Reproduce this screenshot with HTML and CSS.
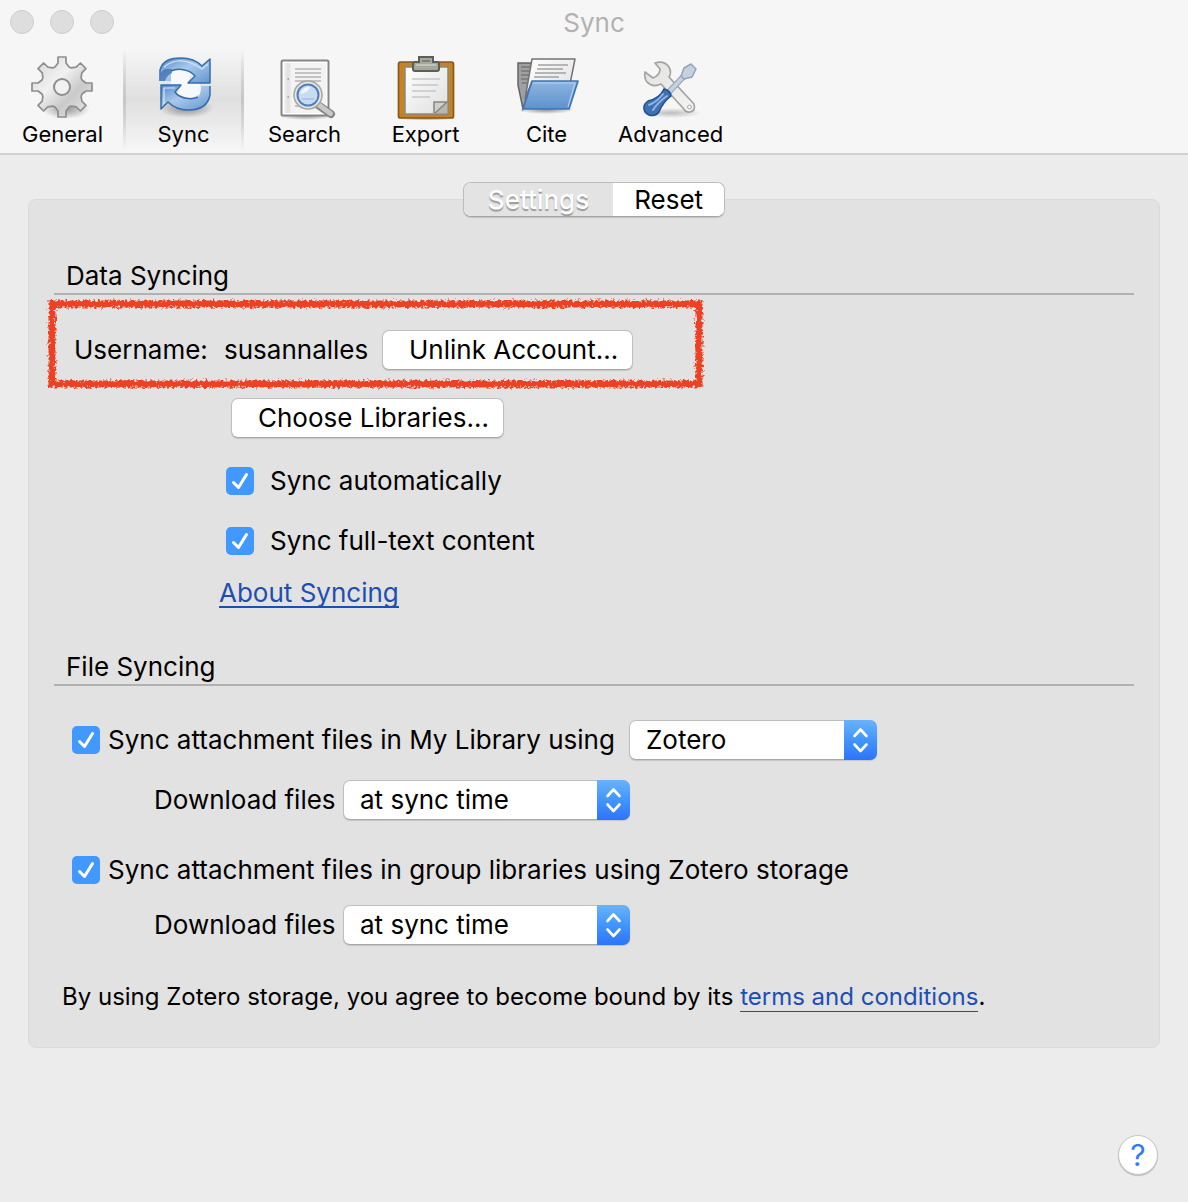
FILE: index.html
```html
<!DOCTYPE html>
<html lang="en">
<head>
<meta charset="utf-8">
<meta name="viewport" content="width=device-width, initial-scale=1">
<title>Sync</title>
<link rel="stylesheet" href="styles.css">
</head>
<body>
<svg class="defs" aria-hidden="true">
  <defs>
    <linearGradient id="metal" x1="0" y1="0" x2="1" y2="1"><stop offset="0" stop-color="#d4d4d4"/><stop offset=".4" stop-color="#f1f1f1"/><stop offset=".65" stop-color="#c9c9c9"/><stop offset="1" stop-color="#ededed"/></linearGradient>
    <linearGradient id="steel" x1="0" y1="0" x2="1" y2="1"><stop offset="0" stop-color="#e2e2e0"/><stop offset="1" stop-color="#f4f4f3"/></linearGradient>
    <linearGradient id="blue" x1="0" y1="0" x2="1" y2="1"><stop offset="0" stop-color="#5288c7"/><stop offset=".45" stop-color="#a9c8ea"/><stop offset="1" stop-color="#6296d0"/></linearGradient>
    <linearGradient id="folder" x1="0" y1="0" x2="0" y2="1"><stop offset="0" stop-color="#8db5e0"/><stop offset="1" stop-color="#5e92cd"/></linearGradient>
    <linearGradient id="paper" x1="0" y1="0" x2="1" y2="1"><stop offset="0" stop-color="#fff"/><stop offset="1" stop-color="#dedede"/></linearGradient>
    <radialGradient id="shade"><stop offset="0" stop-color="#000" stop-opacity=".4"/><stop offset="1" stop-color="#000" stop-opacity="0"/></radialGradient>
    <filter id="crayon" x="-5%" y="-15%" width="110%" height="130%">
      <feTurbulence type="fractalNoise" baseFrequency=".4" numOctaves="2" seed="4" result="noise"/>
      <feDisplacementMap in="SourceGraphic" in2="noise" scale="7" xChannelSelector="R" yChannelSelector="G"/>
    </filter>
    <symbol id="check" viewBox="0 0 28 28"><path d="M7.500 15.500L12.500 20.500L20.500 7.500" fill="none" stroke="#fff" stroke-width="3" stroke-linecap="round" stroke-linejoin="round"/></symbol>
    <symbol id="chevrons" viewBox="0 0 33 40"><path d="M10.500 16L16.500 9.500L22.500 16M10.500 24.500L16.500 31L22.500 24.500" fill="none" stroke="#fff" stroke-width="2.600" stroke-linecap="round" stroke-linejoin="round"/></symbol>
  </defs>
</svg>
<header class="window-top">
  <div class="titlebar">
    <div class="lights"><span class="light"></span><span class="light"></span><span class="light"></span></div>
    <h1 class="title">Sync</h1>
  </div>
  <nav class="toolbar" aria-label="Preferences">
    <button class="tool" type="button">
      <svg class="tool-icon" viewBox="31 54 64 66" aria-hidden="true">
        <ellipse cx="66" cy="109" rx="24" ry="10" fill="url(#shade)"/>
        <path transform="translate(62 87)" fill="url(#metal)" stroke="#8e8e8e" stroke-width="1.700" stroke-linejoin="round" d="M-7-20L-4-24V-30H4V-24L7-20L9.200-19.100L14.100-19.800L18.400-24L24-18.400L19.800-14.100L19.100-9.200L20-7L24-4H30V4H24L20 7L19.100 9.200L19.800 14.100L24 18.400L18.400 24L14.100 19.800L9.200 19.100L7 20L4 24V30H-4V24L-7 20L-9.200 19.100L-14.100 19.800L-18.400 24L-24 18.400L-19.800 14.100L-19.100 9.200L-20 7L-24 4H-30V-4H-24L-20-7L-19.100-9.200L-19.800-14.100L-24-18.400L-18.400-24L-14.100-19.800L-9.200-19.100Z"/>
        <circle cx="62" cy="87" r="8" fill="#f1f1f1" stroke="#8e8e8e" stroke-width="2"/>
      </svg>
      <span>General</span>
    </button>
    <button class="tool tool-selected" type="button" aria-current="page">
      <svg class="tool-icon" viewBox="152 54 64 66" aria-hidden="true">
        <ellipse cx="186" cy="108" rx="28" ry="10" fill="url(#shade)"/>
        <path d="M171 70Q182 66 191 73L188 82H199L202 92Q190 102 177 94L181 85H171Z" fill="#f6f8fb"/>
        <path d="M160 81V70C163 60 171 58 181 58C191 58 197 61 202 66L210 59V83H188L195 76C189 69 178 68 171 71V81Z" fill="url(#blue)"/>
        <path d="M160 81V70C163 60 171 58 181 58C191 58 197 61 202 66L210 59V83H188L195 76C189 69 178 68 171 71" fill="none" stroke="#366cad" stroke-width="1.500" stroke-linejoin="round"/>
        <path d="M161 109V85H181L175 92C180 99 192 100 198 97Q201 95 201 86H210V95C208 106 199 110 188 110C180 110 173 107 168 102Z" fill="url(#blue)"/>
        <path d="M210 86V95C208 106 199 110 188 110C180 110 173 107 168 102L161 109V85H181L175 92C180 99 192 100 198 97" fill="none" stroke="#366cad" stroke-width="1.500" stroke-linejoin="round"/>
        <path d="M161 81V73Q163 68 172 69V73Q167 75 165 81Z" fill="#3569ad" opacity=".7"/>
        <path d="M164 67Q180 54 202 69L208 64" fill="none" stroke="#d0e3f6" stroke-width="1.200"/>
        <path d="M164 104V88H175" fill="none" stroke="#d5e7f9" stroke-width="1.200"/>
      </svg>
      <span>Sync</span>
    </button>
    <button class="tool" type="button">
      <svg class="tool-icon" viewBox="273 54 64 66" aria-hidden="true">
        <ellipse cx="306" cy="116" rx="28" ry="4" fill="url(#shade)"/>
        <rect x="281.500" y="60.500" width="47" height="55" rx="1.500" fill="#fff" stroke="#858585" stroke-width="2"/>
        <rect x="284" y="63" width="42" height="50" fill="#f3f3f3"/><path d="M288 63V113" stroke="#e4e4e4" stroke-width="5"/>
        <path d="M295 69H321M295 73H321M295 77H321M295 81H321M295 106H305" stroke="#b4b4b4" stroke-width="1.500"/>
        <path d="M287.500 79H289M287.500 97H289" stroke="#999" stroke-width="1.500"/>
        <path d="M318 105L331 114" stroke="#858585" stroke-width="8" stroke-linecap="round"/>
        <path d="M319 105L330.500 113.500" stroke="#c8c8c8" stroke-width="5" stroke-linecap="round"/>
        <circle cx="308" cy="95" r="14" fill="#e7e7e3" stroke="#a5a7a0" stroke-width="1.500"/>
        <circle cx="308" cy="95" r="10.500" fill="#c7dbf1" stroke="#527fbf" stroke-width="2"/>
        <path d="M300 94Q303 86 310 87Q308 93 300 94" fill="#f1f6fc"/><path d="M302 99H314" stroke="#91b5dc"/>
      </svg>
      <span>Search</span>
    </button>
    <button class="tool" type="button">
      <svg class="tool-icon" viewBox="394 54 64 66" aria-hidden="true">
        <ellipse cx="427" cy="118" rx="30" ry="3" fill="url(#shade)"/>
        <rect x="398.500" y="62" width="55" height="56" rx="2" fill="#c58328" stroke="#885a17" stroke-width="1.700"/>
        <path d="M405 67H448V114H405Z" fill="url(#paper)" stroke="#898981" stroke-width="1.500"/>
        <path d="M434 113V102H447V113Z" fill="#b6b7b0"/><path d="M434 113V102H447L435 113" fill="#cfd0ca" stroke="#85877f" stroke-width="1.500"/>
        <path d="M412 79H440M412 85H438M412 91H436M412 97H430" stroke="#c6c6c6" stroke-width="1.700"/>
        <path d="M413 64Q413 62 415 62H419V57H433V62H437Q439 62 439 64V69Q439 71 437 71H415Q413 71 413 69Z" fill="#a7a89d" stroke="#5c5f58" stroke-width="2"/>
        <path d="M416 65H436" stroke="#cbccc3" stroke-width="1.500"/><path d="M422 61H430" stroke="#7d8077" stroke-width="2"/>
      </svg>
      <span>Export</span>
    </button>
    <button class="tool" type="button">
      <svg class="tool-icon" viewBox="515 54 64 66" aria-hidden="true">
        <ellipse cx="546" cy="110" rx="28" ry="4" fill="url(#shade)"/>
        <path d="M518 63H533V80L523 109L518 85Z" fill="#a0a0a0" stroke="#646464" stroke-width="1.500"/>
        <path d="M521 67H532M521 71H531M521 75H530M521 79H529M522 83H529" stroke="#777" stroke-width="1.500"/>
        <path d="M532 59H575L570 84H531L525 99Z" fill="url(#paper)" stroke="#747474" stroke-width="1.500" stroke-linejoin="round"/>
        <path d="M538 65H568M537 69H563M535 73H566M534 77H559" stroke="#a1a1a1" stroke-width="1.500"/>
        <path d="M532 81H578L569 109H523Z" fill="url(#folder)" stroke="#3f74b5" stroke-width="1.700" stroke-linejoin="round"/>
        <path d="M533 83H575L568 107" fill="none" stroke="#b1cff0" stroke-width="1.200"/>
      </svg>
      <span>Cite</span>
    </button>
    <button class="tool" type="button">
      <svg class="tool-icon" viewBox="639 54 64 66" aria-hidden="true">
        <ellipse cx="671" cy="113" rx="31" ry="5" fill="url(#shade)" opacity=".6"/>
        <path d="M655 63Q664 60 669 67Q672 73 669 77L694 104Q696 111 690 112Q686 113 683 108L661 84Q653 88 647 82Q644 78 645 72L653 78Q660 75 660 69Z" fill="url(#steel)" stroke="#a3a39f" stroke-width="1.700" stroke-linejoin="round"/>
        <circle cx="689.500" cy="107" r="2" fill="#f8f8f8" stroke="#aaa"/>
        <path d="M668 93L684 76" stroke="#94a2b6" stroke-width="6"/><path d="M668 93L684 76" stroke="#c6d1df" stroke-width="4"/>
        <path d="M681 76L684 68L691 64L696 69L692 77L684 79Z" fill="#c6d1df" stroke="#94a2b6" stroke-width="1.500" stroke-linejoin="round"/>
        <path d="M644 106Q643 112 649 115Q655 117 659 112Q663 102 671 96Q671 91 664 89Q660 98 648 101Q645 103 644 106Z" fill="#3d72b5" stroke="#234f8e" stroke-width="1.500"/>
        <path d="M649 105Q657 102 663 94M653 110Q658 102 667 96" fill="none" stroke="#91b4de" stroke-width="2" stroke-linecap="round"/>
      </svg>
      <span>Advanced</span>
    </button>
  </nav>
</header>
<main class="content">
  <div class="tabs" role="tablist">
    <button class="tab tab-active" type="button" role="tab" aria-selected="true">Settings</button>
    <button class="tab" type="button" role="tab" aria-selected="false">Reset</button>
  </div>
  <div class="panel" role="tabpanel">
    <section>
      <h2 class="heading">Data Syncing</h2>
      <div class="account">
        <span class="account-label">Username:</span>
        <span class="account-name">susannalles</span>
        <button class="push" type="button">Unlink Account…</button>
        <svg class="marker" viewBox="0 0 655 88" preserveAspectRatio="none" aria-hidden="true"><path d="M4 4H651V84H4Z" fill="none" stroke="#ee4023" stroke-width="7" filter="url(#crayon)"/></svg>
      </div>
      <div class="options">
        <button class="push choose" type="button">Choose Libraries…</button>
        <label class="option option-wide"><span class="box"><input type="checkbox" checked><svg aria-hidden="true"><use href="#check"/></svg></span>Sync automatically</label>
        <label class="option option-wide"><span class="box"><input type="checkbox" checked><svg aria-hidden="true"><use href="#check"/></svg></span>Sync full-text content</label>
        <a class="link about" href="#about">About Syncing</a>
      </div>
    </section>
    <section>
      <h2 class="heading">File Syncing</h2>
      <div class="files">
        <div class="row">
          <label class="option option-library"><span class="box"><input type="checkbox" checked><svg aria-hidden="true"><use href="#check"/></svg></span>Sync attachment files in My Library using</label>
          <span class="popup popup-storage"><select aria-label="Storage"><option>Zotero</option><option>WebDAV</option></select><svg aria-hidden="true"><use href="#chevrons"/></svg></span>
        </div>
        <div class="row row-download">
          <label for="library-download">Download files</label>
          <span class="popup"><select id="library-download"><option>at sync time</option><option>as needed</option></select><svg aria-hidden="true"><use href="#chevrons"/></svg></span>
        </div>
        <label class="option option-group"><span class="box"><input type="checkbox" checked><svg aria-hidden="true"><use href="#check"/></svg></span>Sync attachment files in group libraries using Zotero storage</label>
        <div class="row row-download">
          <label for="group-download">Download files</label>
          <span class="popup"><select id="group-download"><option>at sync time</option><option>as needed</option></select><svg aria-hidden="true"><use href="#chevrons"/></svg></span>
        </div>
      </div>
      <p class="terms">By using Zotero storage, you agree to become bound by its <a class="link" href="#terms">terms and conditions</a>.</p>
    </section>
  </div>
</main>
<footer class="footer"><button class="help" type="button" aria-label="Help">?</button></footer>
</body>
</html>
```
FILE: styles.css
```css
* { box-sizing: border-box; }
body {
  display: flex;
  flex-direction: column;
  min-height: 100vh;
  margin: 0;
  background: #ececec;
  color: #000;
  font: 26px/32px Inter, "Liberation Sans", sans-serif;
}
button, select, input { margin: 0; font: inherit; color: inherit; }
.defs { position: absolute; width: 0; height: 0; }

.window-top { background: #f6f6f6; border-bottom: 2px solid #d1d1d1; }
.titlebar { display: grid; grid-template-columns: 1fr auto 1fr; align-items: center; height: 46px; padding: 0 10px; }
.lights { display: flex; gap: 16px; padding-bottom: 2px; }
.light { width: 24px; height: 24px; border: 1px solid #cecece; border-radius: 50%; background: #dedede; }
.title { margin: 0; color: #b2b2b2; font-size: 26px; font-weight: 400; }
.toolbar { display: flex; padding: 3px 2px 3px; }
.tool {
  display: flex;
  flex-direction: column;
  align-items: center;
  min-width: 121px;
  padding: 5px 11px 2px;
  border: 0;
  background: none;
  font-size: 22px;
  line-height: 28px;
}
.tool-icon { width: 64px; height: 66px; }
.tool-selected {
  background:
    linear-gradient(#f6f6f600, #c6c6c6 50%, #f6f6f600) left / 3px 100% no-repeat,
    linear-gradient(#f6f6f600, #c6c6c6 50%, #f6f6f600) right / 3px 100% no-repeat,
    linear-gradient(#f6f6f6, #dfdfdf 50%, #f6f6f6);
}

.content { padding: 27px 28px 0; }
.tabs {
  position: relative;
  display: flex;
  width: fit-content;
  height: 35px;
  margin: 0 auto -18px;
  overflow: hidden;
  border: 1px solid #bdbdbd;
  border-bottom-color: #a6a6a6;
  border-radius: 8px;
  background: #fff;
  box-shadow: 0 1px 1px #0002;
}
.tab { padding: 0 21px; border: 0; background: #fff; }
.tab-active { padding: 0 24px; background: #e3e3e3; color: #fff; font-weight: 500; text-shadow: 0 2px 1px #999; }
.panel { min-height: 849px; padding: 60px 25px 34px; border: 1px solid #dadada; border-radius: 8px; background: #e2e2e2; }
.heading { margin: 0; padding: 0 12px 1px; border-bottom: 2px solid #b1b1b1; font-size: 26px; font-weight: 400; }
.push {
  height: 40px;
  padding: 0 14px 0 26px;
  border: 1px solid #bfbfbf;
  border-bottom-color: #a9a9a9;
  border-radius: 7px;
  background: #fff;
  box-shadow: 0 1px 1px #0002;
  white-space: nowrap;
}
.account { position: relative; display: flex; align-items: center; height: 103px; padding: 6px 0 0 20px; }
.account-label { width: 150px; }
.account-name { width: 158px; }
.marker { position: absolute; top: 5px; left: -6px; width: 655px; height: 88px; overflow: visible; }
.options { display: flex; flex-direction: column; align-items: flex-start; padding-left: 165px; }
.choose { margin: 0 0 27px 12px; }
.option { display: flex; align-items: center; gap: 8px; }
.option-wide { gap: 16px; margin: 0 0 28px 7px; }
.box { display: grid; flex: none; width: 28px; height: 28px; }
.box > * { grid-area: 1 / 1; width: 28px; height: 28px; }
.box input { appearance: none; border-radius: 5px; background: #4198ff; }
.box svg, .popup svg { pointer-events: none; }
.link { color: #1d4fb3; text-decoration: none; border-bottom: 2px solid #1d4fb3; }
.about { margin: -5px 0 43px; line-height: 26px; }
.files { padding: 34px 0 0 18px; }
.row { display: flex; align-items: center; height: 40px; }
.option-library { width: 557px; white-space: nowrap; }
.row-download { margin-top: 20px; padding-left: 82px; }
.row-download label { width: 189px; }
.popup { display: grid; width: 287px; height: 40px; }
.popup > * { grid-area: 1 / 1; }
.popup-storage { width: 248px; }
.popup select {
  appearance: none;
  padding: 0 36px 0 16px;
  border: 1px solid #bfbfbf;
  border-bottom-color: #a9a9a9;
  border-radius: 7px;
  background: #fff;
  box-shadow: 0 1px 1px #0002;
}
.popup svg { justify-self: end; width: 33px; height: 40px; border-radius: 0 7px 7px 0; background: linear-gradient(#6ab2fb, #4196fd 50%, #2d73fb); }
.option-group { margin: 34px 0 -1px; }
.terms { margin: 36px 0 0 8px; font-size: 24px; }
.terms .link { border-bottom-width: 1px; }
.footer { display: flex; justify-content: flex-end; margin-top: auto; padding: 28px 30px 27px; }
.help { width: 40px; height: 40px; padding: 0; border: 1px solid #c5c5c5; border-radius: 50%; background: #fff; box-shadow: 0 1px 1px #0003; color: #2e7bfd; font-size: 30px; line-height: 36px; }
```
